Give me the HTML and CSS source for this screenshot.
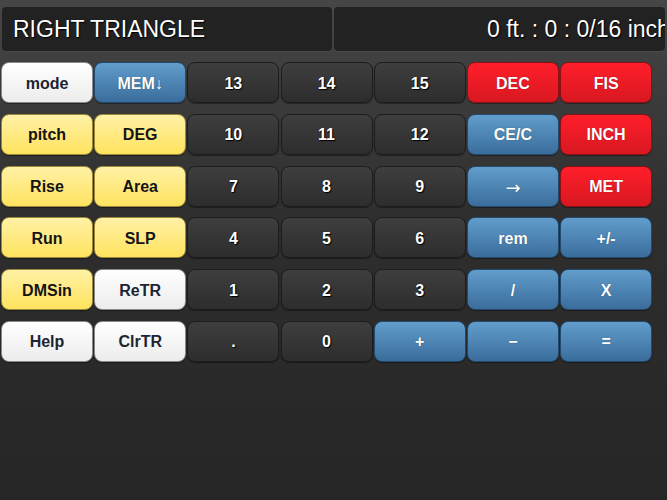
FILE: index.html
```html
<!DOCTYPE html>
<html lang="en">

<head>
    <meta charset="UTF-8">
    <meta name="viewport" content="width=device-width, initial-scale=1.0">
    <title>Right Triangle</title>
    <link rel="stylesheet" href="styles.css">
</head>

<body>

    <!-- 显示区 -->
    <div class="display">
        <div class="screen screen-mode">RIGHT TRIANGLE</div>
        <div class="screen screen-value">0 ft. : 0 : 0/16 inch</div>
    </div>

    <!-- 按键区 -->
    <div class="keys">
        <button class="key white">mode</button>
        <button class="key blue">MEM↓</button>
        <button class="key black">13</button>
        <button class="key black">14</button>
        <button class="key black">15</button>
        <button class="key red">DEC</button>
        <button class="key red">FIS</button>

        <button class="key yellow">pitch</button>
        <button class="key yellow">DEG</button>
        <button class="key black">10</button>
        <button class="key black">11</button>
        <button class="key black">12</button>
        <button class="key blue">CE/C</button>
        <button class="key red">INCH</button>

        <button class="key yellow">Rise</button>
        <button class="key yellow">Area</button>
        <button class="key black">7</button>
        <button class="key black">8</button>
        <button class="key black">9</button>
        <button class="key blue thin">→</button>
        <button class="key red">MET</button>

        <button class="key yellow">Run</button>
        <button class="key yellow">SLP</button>
        <button class="key black">4</button>
        <button class="key black">5</button>
        <button class="key black">6</button>
        <button class="key blue">rem</button>
        <button class="key blue">+/-</button>

        <button class="key yellow">DMSin</button>
        <button class="key white">ReTR</button>
        <button class="key black">1</button>
        <button class="key black">2</button>
        <button class="key black">3</button>
        <button class="key blue">/</button>
        <button class="key blue">X</button>

        <button class="key white">Help</button>
        <button class="key white">ClrTR</button>
        <button class="key black">.</button>
        <button class="key black">0</button>
        <button class="key blue">+</button>
        <button class="key blue">−</button>
        <button class="key blue">=</button>
    </div>

</body>

</html>
```

FILE: styles.css
```css
html {
    height: 100%;
}

body {
    margin: 0;
    min-height: 100%;
    overflow: hidden;
    font-family: "Liberation Sans", Arial, sans-serif;
    background: linear-gradient(#464646, #2e2e2e 45%, #262626);
}

.display {
    display: flex;
    gap: 2px;
    padding: 7px 0 0 2px;
}

.screen {
    height: 44px;
    line-height: 44px;
    background-color: #222222;
    border-radius: 4px;
    color: #ffffff;
    font-size: 23px;
    white-space: nowrap;
    overflow: hidden;
    text-shadow: 0 0 1px #000, 1px 1px 1px #000;
    box-shadow: 0 1px 0 rgba(255, 255, 255, 0.05);
}

.screen-mode {
    width: 319px;
    padding-left: 11px;
}

.screen-value {
    width: 178px;
    padding-left: 153px;
}

.keys {
    display: grid;
    grid-template-columns: repeat(7, 92px);
    grid-auto-rows: 41px;
    column-gap: 1.2px;
    row-gap: 10.75px;
    padding: 11px 0 0 1px;
}

.key {
    margin: 0;
    padding: 2px 0 0 0;
    border-radius: 8px;
    font-family: "Liberation Sans", Arial, sans-serif;
    font-size: 16px;
    font-weight: bold;
    cursor: pointer;
    box-shadow: 0 1px 1px rgba(0, 0, 0, 0.4);
}

.white {
    background: linear-gradient(#ffffff, #ececec);
    border: 1px solid #8a8a8a;
    color: #1b2533;
}

.yellow {
    background: linear-gradient(#fff1a6, #ffe35e);
    border: 1px solid #9c8a3a;
    color: #141414;
}

.black {
    background: linear-gradient(#3e3e3e, #2d2d2d);
    border: 1px solid #1c1c1c;
    color: #ffffff;
    text-shadow: 0 0 1px #000, 1px 1px 1px #000;
}

.blue {
    background: linear-gradient(#619dcb, #3a6d9c);
    border: 1px solid #24496c;
    color: #ffffff;
    text-shadow: 0 0 1px rgba(0, 0, 0, 0.5);
}

.red {
    background: linear-gradient(#ff1e2b, #d81820);
    border: 1px solid #8e1016;
    color: #ffffff;
    text-shadow: 0 0 1px rgba(0, 0, 0, 0.6);
}

.thin {
    font-weight: normal;
    font-family: "DejaVu Sans", sans-serif;
    font-size: 18px;
}
```
